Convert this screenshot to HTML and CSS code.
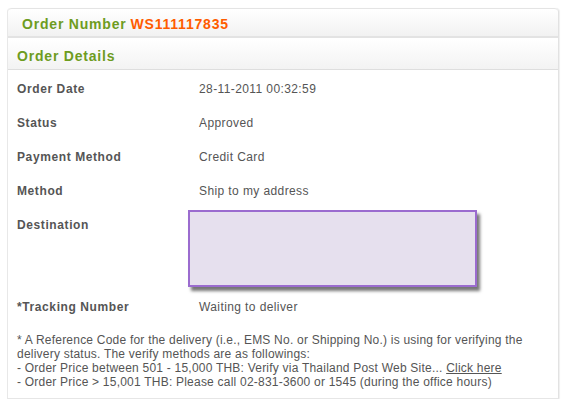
FILE: index.html
```html
<!DOCTYPE html>
<html>
<head>
<meta charset="utf-8">
<link rel="stylesheet" href="styles.css">
</head>
<body>
<div class="panel">
  <div class="head-main">Order Number <span class="order-no">WS111117835</span></div>
  <div class="head-sub">Order Details</div>
  <div class="rows">
    <div class="row"><div class="label">Order Date</div><div class="value">28-11-2011 00:32:59</div></div>
    <div class="row"><div class="label">Status</div><div class="value">Approved</div></div>
    <div class="row"><div class="label">Payment Method</div><div class="value">Credit Card</div></div>
    <div class="row"><div class="label">Method</div><div class="value">Ship to my address</div></div>
    <div class="row row-dest"><div class="label">Destination</div><div class="value"><div class="dest-box"></div></div></div>
    <div class="row"><div class="label">*Tracking Number</div><div class="value">Waiting to deliver</div></div>
  </div>
  <div class="note">
    * A Reference Code for the delivery (i.e., EMS No. or Shipping No.) is using for verifying the<br>
    delivery status. The verify methods are as followings:<br>
    - Order Price between 501 - 15,000 THB: Verify via Thailand Post Web Site... <a class="link" href="#">Click here</a><br>
    - Order Price &gt; 15,001 THB: Please call 02-831-3600 or 1545 (during the office hours)
  </div>
</div>
</body>
</html>
```
FILE: styles.css
```css
html, body {
  margin: 0;
  padding: 0;
  background: #ffffff;
}
body {
  padding: 8px 8px 0 7px;
  font-family: "Liberation Sans", Arial, sans-serif;
  font-size: 12px;
  color: #555555;
}
.panel {
  width: 552px;
  height: 391px;
  box-sizing: border-box;
  border-left: 1px solid #e8e8e8;
  border-right: 1px solid #e2e2e2;
  border-bottom: 1px solid #e6e6e6;
  box-shadow: 1px 0 1px #f0f0f0;
  border-radius: 4px 4px 0 0;
  display: flex;
  flex-direction: column;
}
.head-main {
  height: 30px;
  box-sizing: border-box;
  border-top: 1px solid #e4e4e4;
  border-radius: 4px 4px 0 0;
  background: linear-gradient(#ffffff, #f2f2f2);
  border-bottom: 2px solid #e3e3e3;
  padding: 3px 0 0 14px;
  display: flex;
  align-items: center;
  font-size: 14px;
  font-weight: bold;
  letter-spacing: 0.8px;
  color: #6e9c1f;
}
.order-no {
  color: #ff5c00;
  margin-left: 4px;
}
.head-sub {
  height: 31px;
  margin-top: 1px;
  box-sizing: border-box;
  background: linear-gradient(#ffffff, #f3f3f3);
  border-bottom: 1px solid #dedede;
  padding: 3px 0 0 9px;
  display: flex;
  align-items: center;
  font-size: 14px;
  font-weight: bold;
  letter-spacing: 0.8px;
  color: #6e9c1f;
}
.rows {
  display: flex;
  flex-direction: column;
}
.row {
  display: flex;
  height: 34px;
  align-items: flex-start;
}
.label {
  width: 191px;
  padding: 12px 0 0 9px;
  line-height: 14px;
  font-weight: bold;
  letter-spacing: 0.6px;
  flex: none;
  box-sizing: border-box;
}
.value {
  padding-top: 12px;
  line-height: 14px;
  letter-spacing: 0.4px;
}
.row-dest {
  height: 82px;
}
.row-dest .value {
  padding-top: 4px;
  margin-left: -11px;
}
.dest-box {
  width: 289px;
  height: 77px;
  box-sizing: border-box;
  border: 2px solid #9b6ccf;
  background: #e6e0ee;
  box-shadow: 3px 4px 3px #777777;
}
.note {
  padding: 11px 0 0 9px;
  line-height: 14px;
  letter-spacing: 0.22px;
}
.link {
  color: #555555;
  text-decoration: underline;
}
```
